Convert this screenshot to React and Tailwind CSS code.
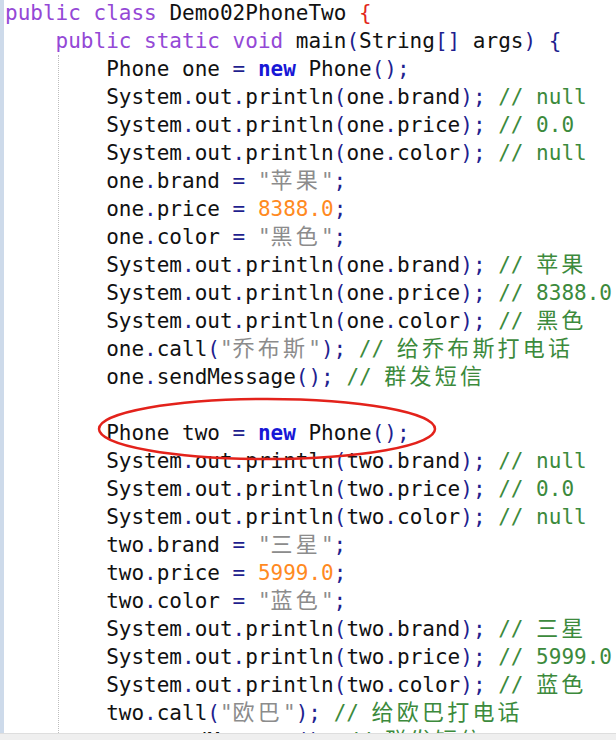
import React from "react";

const LINE1 = "public class Demo02PhoneTwo {";
const LINE2 = "public static void main(String[] args) {";
const INNER = [
  "Phone one = new Phone();",
  "System.out.println(one.brand); // null",
  "System.out.println(one.price); // 0.0",
  "System.out.println(one.color); // null",
  'one.brand = "苹果";',
  "one.price = 8388.0;",
  'one.color = "黑色";',
  "System.out.println(one.brand); // 苹果",
  "System.out.println(one.price); // 8388.0",
  "System.out.println(one.color); // 黑色",
  'one.call("乔布斯"); // 给乔布斯打电话',
  "one.sendMessage(); // 群发短信",
  "",
  "Phone two = new Phone();",
  "System.out.println(two.brand); // null",
  "System.out.println(two.price); // 0.0",
  "System.out.println(two.color); // null",
  'two.brand = "三星";',
  "two.price = 5999.0;",
  'two.color = "蓝色";',
  "System.out.println(two.brand); // 三星",
  "System.out.println(two.price); // 5999.0",
  "System.out.println(two.color); // 蓝色",
  'two.call("欧巴"); // 给欧巴打电话',
  "two.sendMessage(); // 群发短信",
];

const CLS = {
  plain: "text-[#111111]",
  kw: "text-[#9448d6]",
  new: "text-[#1717d6] font-bold",
  cmt: "text-[#3c8a3c]",
  str: "text-[#8c8c8c]",
  num: "text-[#ff8a1f]",
  punct: "text-[#1f1f8f]",
  red: "text-[#e2281c]",
};

function tokenize(line) {
  const out = [];
  const re =
    /(\/\/.*$)|("[^"]*")|(\b(?:public|class|static|void)\b)|(\bnew\b)|((?<![\w])\d+\.\d+)|([(){}\[\];=.])/g;
  let last = 0;
  let m;
  while ((m = re.exec(line))) {
    if (m.index > last) out.push([line.slice(last, m.index), "plain"]);
    const t = m[0];
    const type = m[1]
      ? "cmt"
      : m[2]
      ? "str"
      : m[3]
      ? "kw"
      : m[4]
      ? "new"
      : m[5]
      ? "num"
      : "punct";
    out.push([t, type]);
    last = m.index + t.length;
  }
  if (last < line.length) out.push([line.slice(last), "plain"]);
  return out;
}

function withCJK(text) {
  const parts = text.split(/([\u3400-\u9fff]+)/);
  return parts.map((p, i) =>
    /[\u3400-\u9fff]/.test(p) ? (
      <span
        key={i}
        className="font-['Noto_Sans_CJK_SC',sans-serif] text-[22px] leading-none tracking-[3.2px]"
      >
        {p}
      </span>
    ) : (
      p
    )
  );
}

function Line({ text, redBrace }) {
  const toks = tokenize(text);
  return (
    <div className="h-[28px] leading-[28px] whitespace-pre">
      {toks.map(([t, type], i) => {
        const ty = redBrace && t === "{" ? "red" : type;
        return (
          <span key={i} className={CLS[ty]}>
            {withCJK(t)}
          </span>
        );
      })}
      {text === "" ? " " : null}
    </div>
  );
}

export default function App() {
  return (
    <div className="relative w-[616px] h-[740px] flex flex-col bg-white overflow-hidden font-['DejaVu_Sans_Mono',monospace] text-[21px]">
      <div className="flex flex-1 min-h-0">
        <div className="w-[4px] bg-[#cddaea] shrink-0" />
        <div className="flex-1 overflow-hidden pl-[1px] -mt-[1px]">
          <Line text={LINE1} redBrace />
          <div className="pl-[4ch]">
            <Line text={LINE2} />
          </div>
          <div className="ml-[calc(4ch+2px)] border-l border-dotted border-[#bdbdbd] pl-[calc(4ch-3px)]">
            {INNER.map((l, i) => (
              <Line key={i} text={l} />
            ))}
          </div>
        </div>
      </div>
      <div className="h-[7px] shrink-0 bg-[#efefef] border-t border-[#dedede]" />
      <svg
        className="absolute left-0 top-0 pointer-events-none"
        width="616"
        height="740"
        viewBox="0 0 616 740"
      >
        <ellipse
          cx="267"
          cy="429"
          rx="168"
          ry="30"
          fill="none"
          stroke="#e3221b"
          strokeWidth="2.5"
        />
      </svg>
    </div>
  );
}
